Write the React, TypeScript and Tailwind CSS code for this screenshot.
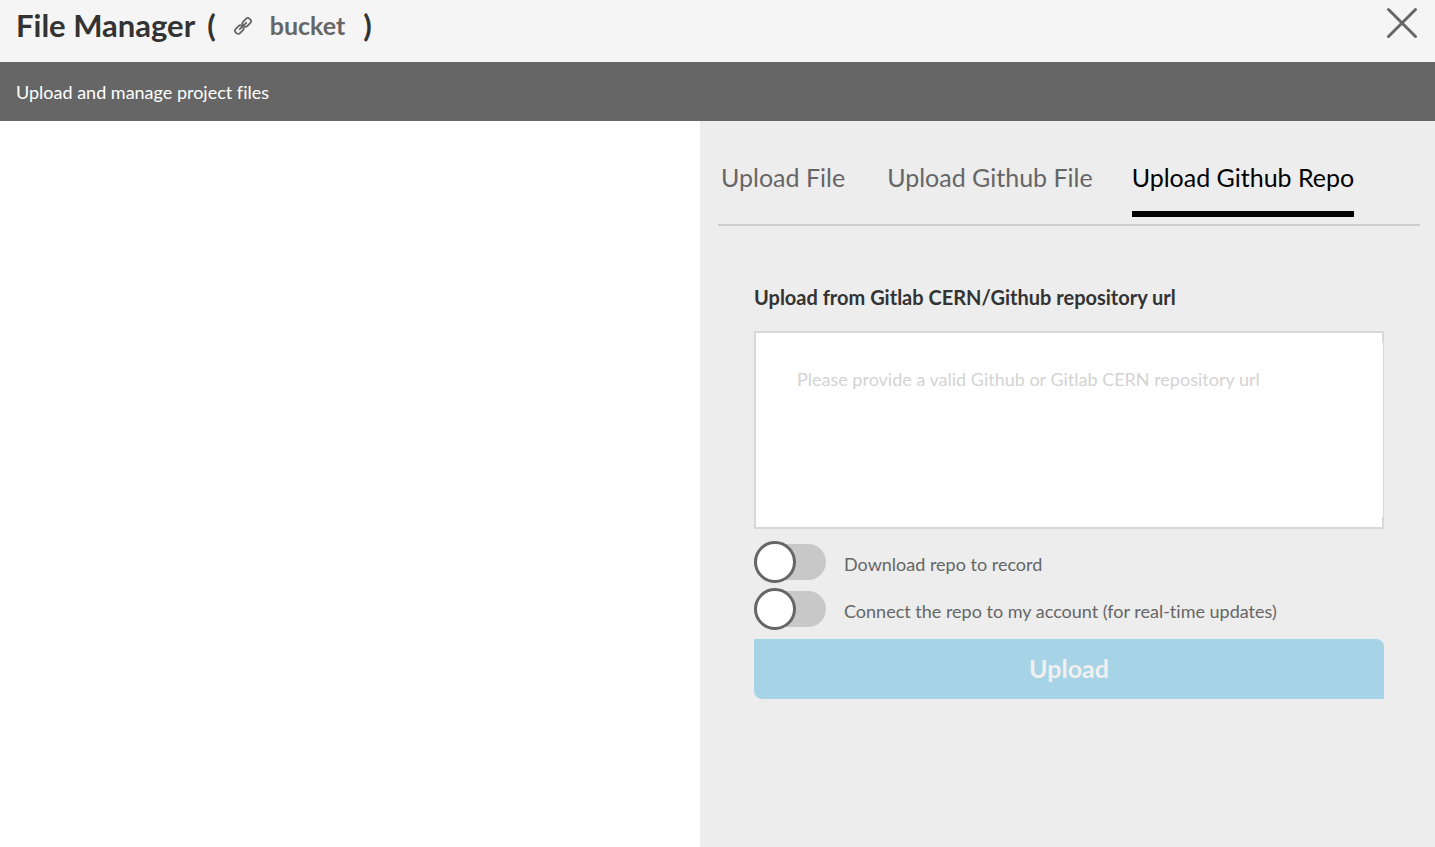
import { useState } from "react";

const tabs = ["Upload File", "Upload Github File", "Upload Github Repo"];

function LinkIcon() {
  return (
    <svg viewBox="0 0 24 24" className="mt-[2px] size-[18px]" fill="none" stroke="#666666" strokeWidth="2.4" aria-hidden="true">
      <g transform="rotate(-45 12 12)">
        <rect x="-1" y="8" width="12" height="8" rx="3.4" />
        <rect x="13" y="8" width="12" height="8" rx="3.4" />
        <path d="M6 12h12" strokeLinecap="round" />
      </g>
    </svg>
  );
}

function Toggle({ id, label }: { id: string; label: string }) {
  return (
    <label htmlFor={id} className="flex h-[47px] cursor-pointer items-center gap-[18px]">
      <input id={id} type="checkbox" className="peer sr-only" />
      <span className="flex h-9 w-[72px] items-center rounded-full bg-[#c8c8c8] peer-checked:justify-end">
        <span className="size-[42px] shrink-0 rounded-full border-3 border-[#666666] bg-white" />
      </span>
      <span className="pt-1 text-[18px] leading-6 text-[#666666]">{label}</span>
    </label>
  );
}

export default function App() {
  const [active, setActive] = useState(2);
  return (
    <div className="flex min-h-screen flex-col bg-white font-['Lato','Open_Sans',sans-serif] text-[#333333] [font-variant-ligatures:none]">
      <header className="flex h-[62px] items-start justify-between bg-[#f5f5f5] pl-4 pr-[17px]">
        <h1 className="flex items-center pt-1 text-[31px] font-bold leading-[42px]">
          <span className="pr-3">File Manager</span>
          <span>(</span>
          <a href="#bucket" className="flex items-center gap-[18px] px-[18px] text-[25px] leading-10 text-[#666666]">
            <LinkIcon />
            <span>bucket</span>
          </a>
          <span>)</span>
        </h1>
        <button type="button" aria-label="Close" className="pt-[7px]">
          <svg viewBox="0 0 32 32" className="size-8" fill="none" stroke="#666666" strokeWidth="3" strokeLinecap="round">
            <path d="M2.5 2.5 29.5 29.5M29.5 2.5 2.5 29.5" />
          </svg>
        </button>
      </header>
      <div className="flex h-[59px] items-center bg-[#666666] px-4 text-[18px] leading-6 text-white">
        <p>Upload and manage project files</p>
      </div>
      <main className="grid flex-1 grid-cols-[20fr_21fr]">
        <section aria-label="Files" />
        <section className="bg-[#ededed] pl-[18px] pr-[15px] pt-9">
          <div role="tablist" className="flex gap-9 border-b-2 border-[#cccccc] pb-[7px]">
            {tabs.map((tab, i) => (
              <button
                key={tab}
                type="button"
                role="tab"
                aria-selected={i === active}
                onClick={() => setActive(i)}
                className={
                  i === active
                    ? "border-b-6 border-black pb-[18px] pt-1 text-[25px] leading-8 text-black"
                    : "border-b-6 border-transparent px-[3px] pb-[18px] pt-1 text-[25px] leading-8 text-[#666666]"
                }
              >
                {tab}
              </button>
            ))}
          </div>
          <form className="px-9 pt-14" onSubmit={(e) => e.preventDefault()}>
            <label htmlFor="repo-url" className="block text-[20px] font-bold leading-[30px]">
              Upload from Gitlab CERN/Github repository url
            </label>
            <div className="mt-[19px] border-2 border-[#d8d8d8] bg-white py-[10px]">
              <textarea
                id="repo-url"
                placeholder="Please provide a valid Github or Gitlab CERN repository url"
                className="-mr-px block h-[174px] w-[calc(100%+1px)] resize-none bg-white px-[41px] py-6 text-[18px] leading-6 outline-none placeholder:text-[#d3d3d3]"
              />
            </div>
            <div className="pb-[7px] pt-[9px]">
              <Toggle id="download" label="Download repo to record" />
              <Toggle id="connect" label="Connect the repo to my account (for real-time updates)" />
            </div>
            <button
              type="submit"
              className="block h-[60px] w-full rounded-bl-lg rounded-tr-lg bg-[#a6d3e6] text-[25px] font-bold text-[#f0f0f0]"
            >
              Upload
            </button>
          </form>
        </section>
      </main>
    </div>
  );
}
